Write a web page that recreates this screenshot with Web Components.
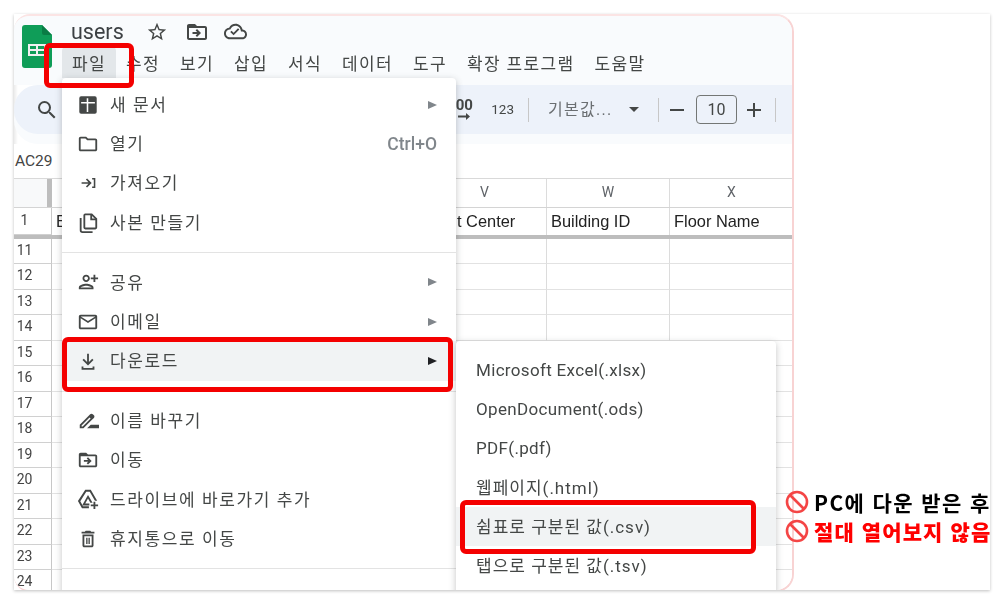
<!DOCTYPE html>
<html lang="ko">
<head>
<meta charset="utf-8">
<title>users</title>
<style>
  html, body { margin: 0; background: #fff; }
  body { font-family: Roboto, "Noto Sans CJK KR", sans-serif; width: 1005px; height: 605px; overflow: hidden; }
</style>
</head>
<body>
<shot-frame>
  <sheet-window>
    <sheet-header title-text="users">
      <span>파일</span><span>수정</span><span>보기</span><span>삽입</span><span>서식</span><span>데이터</span><span>도구</span><span>확장 프로그램</span><span>도움말</span>
    </sheet-header>
    <sheet-toolbar></sheet-toolbar>
    <name-bar>AC29</name-bar>
    <sheet-grid></sheet-grid>

    <file-menu>
      <menu-item icon="grid">새 문서</menu-item>
      <menu-item icon="folder" shortcut="Ctrl+O" noarrow>열기</menu-item>
      <menu-item icon="import" noarrow>가져오기</menu-item>
      <menu-item icon="copy" noarrow>사본 만들기</menu-item>
      <menu-sep></menu-sep>
      <menu-item icon="share">공유</menu-item>
      <menu-item icon="mail">이메일</menu-item>
      <menu-item icon="download" active>다운로드</menu-item>
      <menu-sep></menu-sep>
      <menu-item icon="rename" noarrow>이름 바꾸기</menu-item>
      <menu-item icon="move" noarrow>이동</menu-item>
      <menu-item icon="shortcut" noarrow>드라이브에 바로가기 추가</menu-item>
      <menu-item icon="trash" noarrow>휴지통으로 이동</menu-item>
      <menu-sep></menu-sep>
    </file-menu>

    <sub-menu>
      <menu-item plain noarrow>Microsoft Excel(.xlsx)</menu-item>
      <menu-item plain noarrow>OpenDocument(.ods)</menu-item>
      <menu-item plain noarrow>PDF(.pdf)</menu-item>
      <menu-item plain hangul noarrow>웹페이지(.html)</menu-item>
      <menu-item plain hangul noarrow active>쉼표로 구분된 값(.csv)</menu-item>
      <menu-item plain hangul noarrow>탭으로 구분된 값(.tsv)</menu-item>
    </sub-menu>
  </sheet-window>

  <red-box style="left:30px;top:29px;width:90px;height:45px"></red-box>
  <red-box style="left:48px;top:323px;width:391px;height:55px"></red-box>
  <red-box style="left:446px;top:486px;width:296px;height:54px"></red-box>

  <note-block>
    <note-line>PC에 다운 받은 후</note-line>
    <note-line alert>절대 열어보지 않음</note-line>
  </note-block>
</shot-frame>

<script>
  // Material style paths, viewBox 0 0 24 24
  const ICONS = {
    search: '<path d="M15.5 14h-.79l-.28-.27A6.471 6.471 0 0 0 16 9.5 6.5 6.5 0 1 0 9.5 16c1.61 0 3.09-.59 4.23-1.57l.27.28v.79l5 4.99L20.49 19l-4.99-5zm-6 0C7.01 14 5 11.99 5 9.5S7.01 5 9.5 5 14 7.01 14 9.5 11.99 14 9.5 14z"/>',
    star: '<path d="M22 9.24l-7.19-.62L12 2 9.19 8.63 2 9.24l5.46 4.73L5.82 21 12 17.27 18.18 21l-1.63-7.03L22 9.24zM12 15.4l-3.76 2.27 1-4.28-3.32-2.88 4.38-.38L12 6.1l1.71 4.04 4.38.38-3.32 2.88 1 4.28L12 15.4z"/>',
    move: '<path d="M20 6h-8l-2-2H4c-1.1 0-2 .9-2 2v12c0 1.1.9 2 2 2h16c1.1 0 2-.9 2-2V8c0-1.1-.9-2-2-2zm0 12H4V8h16v10z"/><path d="M12.2 12H7.5v2h4.7l-1.6 1.6L12 17l4-4-4-4-1.4 1.4z"/>',
    cloud: '<path d="M19.35 10.04C18.67 6.59 15.64 4 12 4 9.11 4 6.6 5.64 5.35 8.04 2.34 8.36 0 10.91 0 14c0 3.31 2.69 6 6 6h13c2.76 0 5-2.24 5-5 0-2.64-2.05-4.78-4.65-4.96zM19 18H6c-2.21 0-4-1.79-4-4 0-2.05 1.53-3.76 3.56-3.97l1.07-.11.5-.95C8.08 7.14 9.94 6 12 6c2.62 0 4.88 1.86 5.39 4.43l.3 1.5 1.53.11c1.56.1 2.78 1.41 2.78 2.96 0 1.65-1.35 3-3 3z"/><path d="M10 16l-3.5-3.5 1.4-1.4 2.1 2.1 4.6-4.6 1.4 1.4z"/>',
    grid: '<path fill-rule="evenodd" d="M4.5 2.5h15a2 2 0 0 1 2 2v15a2 2 0 0 1-2 2h-15a2 2 0 0 1-2-2v-15a2 2 0 0 1 2-2zM4.500 8.600v1.700h6.100v9.200h1.700v-9.200h7.200V8.600h-7.200V4.500h-1.700v4.100z"/>',
    folder: '<path d="M9.17 6l2 2H20v10H4V6h5.17M10 4H4c-1.1 0-1.99.9-1.99 2L2 18c0 1.1.9 2 2 2h16c1.1 0 2-.9 2-2V8c0-1.1-.9-2-2-2h-8l-2-2z"/>',
    import: '<path d="M11 7l-1.300 1.300 2.800 2.800H5v1.800h7.500l-2.800 2.800L11 17l5-5z"/><path d="M16.500 6.500H20v11h-3.500v-1.700h1.800V8.200h-1.800z"/>',
    copy: '<g fill="none" stroke="#444746" stroke-width="2"><path d="M9 2.500h7l5 5V17a1 1 0 0 1-1 1H9a1 1 0 0 1-1-1V3.500a1 1 0 0 1 1-1z"/><path d="M15.500 2.500V8H21"/><path d="M4 6.500V20a2 2 0 0 0 2 2h11"/></g>',
    share: '<path d="M10 12c2.21 0 4-1.79 4-4s-1.79-4-4-4-4 1.79-4 4 1.79 4 4 4zm0-6c1.1 0 2 .9 2 2s-.9 2-2 2-2-.9-2-2 .9-2 2-2zm0 8c-2.67 0-8 1.34-8 4v2h16v-2c0-2.66-5.33-4-8-4zm-6 4c.2-.72 3.3-2 6-2s5.8 1.29 6 2zM20 7V4h-2v3h-3v2h3v3h2V9h3V7z"/>',
    mail: '<path d="M20 4H4c-1.1 0-1.99.9-1.99 2L2 18c0 1.1.9 2 2 2h16c1.1 0 2-.9 2-2V6c0-1.1-.9-2-2-2zm0 14H4V8l8 5 8-5v10zm-8-7L4 6h16l-8 5z"/>',
    download: '<path d="M11 4h2v9.2l3.6-3.6L18 11l-6 6-6-6 1.4-1.4 3.6 3.6zM5 18h2v1.5h10V18h2v3.5H5z"/>',
    rename: '<path d="M18.41 5.8L17.2 4.59c-.78-.78-2.05-.78-2.83 0l-2.68 2.68L3 15.96V20h4.04l8.74-8.74 2.63-2.63c.79-.78.79-2.05 0-2.83zM6.21 18H5v-1.21l8.66-8.66 1.21 1.21L6.21 18zM11 20l4-4h10v4z"/>',
    shortcut: '<path d="M9 2h6l7 12h-2.4L13.9 4H10.1L3.6 14.4l3 5.6H13v2H5.4L1 14.3z"/><path d="M12 7.5l5 8.5h-2.4L12 11.5 9 17h4.5v2H5.6z"/><path d="M18 15h2v3h3v2h-3v3h-2v-3h-3v-2h3z"/>',
    trash: '<path d="M16 9v10H8V9h8m-1.5-6h-5l-1 1H5v2h14V4h-3.5l-1-1zM18 7H6v12c0 1.1.9 2 2 2h8c1.1 0 2-.9 2-2V7z"/><path d="M10 10.5h1.5v7H10zM12.5 10.5H14v7h-1.5z"/>',
    ban: '<circle cx="12" cy="12" r="10" fill="none" stroke="#f44545" stroke-width="2.6"/><path d="M5 5l14 14" fill="none" stroke="#f44545" stroke-width="2.6"/>'
  };

  class UiIcon extends HTMLElement {
    connectedCallback() {
      const size = this.getAttribute('size') || 22;
      const color = this.getAttribute('color') || '#444746';
      this.attachShadow({ mode: 'open' }).innerHTML = `
        <style>:host { display: inline-flex; flex: none; } svg { display: block; }</style>
        <svg width="${size}" height="${size}" viewBox="0 0 24 24" fill="${color}">${ICONS[this.getAttribute('name')]}</svg>`;
    }
  }

  class ShotFrame extends HTMLElement {
    constructor() {
      super();
      this.attachShadow({ mode: 'open' }).innerHTML = `
        <style>
          :host { display: block; position: absolute; left: 14px; top: 14px; width: 976px; height: 576px;
            background: #fff; overflow: hidden; filter: blur(.3px); box-shadow: 0 1px 3px rgba(0,0,0,.25); }
        </style>
        <slot></slot>`;
    }
  }

  class SheetWindow extends HTMLElement {
    constructor() {
      super();
      this.attachShadow({ mode: 'open' }).innerHTML = `
        <style>
          :host { display: flex; flex-direction: column; position: relative; box-sizing: border-box;
            width: 780px; height: 578px; overflow: hidden; background: #fff;
            border: 2px solid #f8d3d3; border-left: 0; border-top-color: #fbe4e4;
            border-radius: 16px 18px 18px 16px; box-shadow: inset 2px 0 3px rgba(0,0,0,.08); }
        </style>
        <slot></slot>`;
    }
  }

  class SheetHeader extends HTMLElement {
    constructor() {
      super();
      this.attachShadow({ mode: 'open' }).innerHTML = `
        <style>
          :host { display: flex; height: 69px; background: #f9fbfd; padding-left: 8px; gap: 10px; color: #444746; }
          .logo { margin-top: 9px; }
          .col { display: flex; flex-direction: column; }
          .title { display: flex; align-items: center; height: 31px; padding-left: 9px; font: 21.5px Roboto, sans-serif; color: #3c4043; }
          .title span { width: 75px; }
          .menu { display: flex; height: 31px; gap: 0; }
          ::slotted(span) { display: flex; align-items: center; padding: 0 10px; margin-right: 0;
            font-size: 17px; letter-spacing: 1.35px; white-space: nowrap; border-radius: 4px 4px 0 0; color: #444746; }
          ::slotted(span:first-child) { background: #e3e7ea; }
        </style>
        <svg class="logo" width="30" height="43" viewBox="0 0 30 43">
          <path d="M3 0h17l10 10v30a3 3 0 0 1-3 3H3a3 3 0 0 1-3-3V3a3 3 0 0 1 3-3z" fill="#0f9d58"/>
          <path d="M20 0l10 10H22a2 2 0 0 1-2-2z" fill="#0a7c45"/>
          <path d="M6 19h18v12H6zm2 2v3h6v-3zm8 0v3h6v-3zm-8 5v3h6v-3zm8 0v3h6v-3z" fill="#f1f1f1" fill-rule="evenodd"/>
        </svg>
        <div class="col">
          <div class="title">
            <span></span>
            <ui-icon name="star" size="22" style="margin-right:17px"></ui-icon>
            <ui-icon name="move" size="24" style="margin-right:15px"></ui-icon>
            <ui-icon name="cloud" size="23"></ui-icon>
          </div>
          <div class="menu"><slot></slot></div>
        </div>`;
      this.shadowRoot.querySelector('.title span').textContent = this.getAttribute('title-text');
    }
  }

  class SheetToolbar extends HTMLElement {
    constructor() {
      super();
      this.attachShadow({ mode: 'open' }).innerHTML = `
        <style>
          :host { display: flex; align-items: center; height: 49px; margin-bottom: 10px; box-shadow: 0 10px 0 #f9fbfd;
            background: #edf2fa; border-radius: 24px 0 0 24px; color: #444746; }
          .search { margin-left: 21px; margin-right: auto; }
          .dec { display: flex; flex-direction: column; align-items: center; width: 18px; font: bold 15px/12px Roboto, sans-serif; margin-right: 17px; }
          .dec svg { display: block; margin-top: 1px; }
          .n123 { font: 13.5px Roboto, sans-serif; margin: -2px 14px 0 1px; }
          .div { width: 1px; height: 24px; background: #c7c7c7; }
          .font { font-size: 16px; letter-spacing: 1.3px; color: #6b6f72; margin: -4px 0 0 19px; width: 81px; white-space: nowrap; }
          .caret { width: 0; height: 0; border: 5px solid transparent; border-top: 5px solid #444746; border-bottom: 0; margin-right: 19px; }
          .size { box-sizing: border-box; width: 41px; height: 29px; border: 1px solid #747775; border-radius: 4px;
            display: flex; align-items: center; justify-content: center; font: 16px Roboto, sans-serif; margin: 0 10px 0 12px; }
          .pm { width: 14px; height: 2px; background: #444746; position: relative; margin-left: 11px; }
          .pm.plus { margin: 0 14px 0 0; }
          .pm.plus::after { content: ""; position: absolute; left: 6px; top: -6px; width: 2px; height: 14px; background: #444746; }
          .end { margin-right: 16px; }
        </style>
        <ui-icon class="search" name="search" size="24"></ui-icon>
        <div class="dec"><span>00</span><svg width="14" height="9" viewBox="0 0 14 9" fill="#444746"><path d="M1 3.6h8V1l4 3.5L9 8V5.4H1z"/></svg></div>
        <div class="n123">123</div>
        <div class="div"></div>
        <div class="font">기본값...</div>
        <div class="caret"></div>
        <div class="div"></div>
        <div class="pm"></div>
        <div class="size">10</div>
        <div class="pm plus"></div>
        <div class="div end"></div>`;
    }
  }

  class NameBar extends HTMLElement {
    constructor() {
      super();
      this.attachShadow({ mode: 'open' }).innerHTML = `
        <style>
          :host { display: flex; align-items: center; height: 34px; padding-left: 1px; font: 15.5px Roboto, sans-serif; color: #444; background: #fff; position: relative; }
        </style>
        <slot></slot>`;
    }
  }

  class SheetGrid extends HTMLElement {
    constructor() {
      super();
      const cols = ['', '', 'V', 'W', 'X'];
      const body = ['', 'E', 't Center', 'Building ID', 'Floor Name'];
      const cell = (txt, cls) => `<div class="${cls}">${txt}</div>`;
      let rows = '';
      for (let n = 11; n <= 24; n++) {
        rows += cell(n, 'rn') + cell('', 'c') + cell('', 'c') + cell('', 'c') + cell('', 'c');
      }
      this.attachShadow({ mode: 'open' }).innerHTML = `
        <style>
          :host { display: block; flex: 1; border-top: 1px solid #d9d9d9; overflow: hidden; background: #fff; }
          .g { display: grid; grid-template-columns: 38px 371px 124px 123px 124px; }
          .head { grid-auto-rows: 28px; }
          .first { grid-auto-rows: 26.5px; border-bottom: 4.5px solid #bdbdbd; border-top: 1px solid #d4d4d4; box-sizing: content-box; }
          .rows { grid-auto-rows: 25.5px; }
          .g > div { box-sizing: border-box; border-right: 1px solid #dcdcdc; white-space: nowrap; overflow: hidden; }
          .ch { display: flex; align-items: center; justify-content: center; padding-bottom: 2px; font: 14px Roboto, sans-serif; color: #5f6368; }
          .corner { background: #f8f9fa; border-right: 5px solid #bdbdbd !important; }
          .t { display: flex; align-items: center; font: 16.4px "Liberation Sans", sans-serif; color: #222; padding-left: 4px; }
          .t.cut { padding-left: 34px; }
          .rn { font: 14px/23px Roboto, sans-serif; color: #444; padding-right: 16px; text-align: center; border-bottom: 1px solid #d0d0d0; border-right-color: #c7c7c7 !important; }
          .rh1 { line-height: 24px; }
          .c { border-bottom: 1px solid #e2e2e2; }
        </style>
        <div class="g head">
          ${cell('', 'ch corner')}${cols.slice(1).map(c => cell(c, 'ch')).join('')}
        </div>
        <div class="g first">
          ${cell('1', 'rn rh1')}${cell(body[1], 't')}${cell(body[2], 't cut')}${cell(body[3], 't')}${cell(body[4], 't')}
        </div>
        <div class="g rows">${rows}</div>`;
    }
  }

  class FileMenu extends HTMLElement {
    constructor() {
      super();
      this.attachShadow({ mode: 'open' }).innerHTML = `
        <style>
          :host { display: block; position: absolute; left: 48px; top: 62px; width: 394px; height: 530px; box-sizing: border-box;
            padding-top: 7px; background: #fff; border-radius: 4px; box-shadow: 0 2px 7px rgba(60,64,67,.3); overflow: hidden; }
        </style>
        <slot></slot>`;
    }
  }

  class SubMenu extends HTMLElement {
    constructor() {
      super();
      this.attachShadow({ mode: 'open' }).innerHTML = `
        <style>
          :host { display: block; position: absolute; left: 442px; top: 325px; width: 320px; height: 260px; box-sizing: border-box;
            padding-top: 9px; background: #fff; border-radius: 4px; box-shadow: 0 2px 7px rgba(60,64,67,.3); overflow: hidden; }
        </style>
        <slot></slot>`;
    }
  }

  class MenuItem extends HTMLElement {
    connectedCallback() {
      const icon = this.getAttribute('icon');
      const shortcut = this.getAttribute('shortcut');
      const noarrow = this.hasAttribute('noarrow');
      this.attachShadow({ mode: 'open' }).innerHTML = `
        <style>
          :host { display: flex; align-items: center; height: 39.3px; box-sizing: border-box; padding: 0 19px 0 15px;
            font-size: 17px; letter-spacing: 1.6px; color: #444746; white-space: nowrap; }
          :host([plain]) { padding-left: 20px; letter-spacing: .33px; }
          :host([hangul]) { letter-spacing: 1px; }
          :host([active]) { background: #f1f3f4; }
          .ic { width: 33px; display: flex; }
          .label { flex: 1; padding-bottom: 2.5px; }
          :host([plain]:not([hangul])) .label { padding-bottom: 0; }
          .sc { font: 500 17.5px Roboto, sans-serif; color: #80868b; letter-spacing: 0; }
          .ar { width: 0; height: 0; border: 4px solid transparent; border-left: 9px solid #80868b; border-right: 0; }
          :host([active]) .ar { border-left-color: #202124; }
        </style>
        ${icon ? `<span class="ic"><ui-icon name="${icon}" size="22"></ui-icon></span>` : ''}
        <span class="label"><slot></slot></span>
        ${shortcut ? `<span class="sc">${shortcut}</span>` : ''}
        ${noarrow ? '' : '<span class="ar"></span>'}`;
    }
  }

  class MenuSep extends HTMLElement {
    constructor() {
      super();
      this.attachShadow({ mode: 'open' }).innerHTML = `
        <style>:host { display: block; height: 1px; margin: 10px 0 9.5px; background: #e3e3e3; }</style>`;
    }
  }

  class RedBox extends HTMLElement {
    constructor() {
      super();
      this.attachShadow({ mode: 'open' }).innerHTML = `
        <style>
          :host { display: block; position: absolute; box-sizing: border-box; border: 5px solid #f40000; border-radius: 6px; }
        </style>`;
    }
  }

  class NoteBlock extends HTMLElement {
    constructor() {
      super();
      this.attachShadow({ mode: 'open' }).innerHTML = `
        <style>
          :host { display: flex; flex-direction: column; gap: 5px; position: absolute; left: 771px; top: 476px; width: 205px; }
        </style>
        <slot></slot>`;
    }
  }

  class NoteLine extends HTMLElement {
    constructor() {
      super();
      this.attachShadow({ mode: 'open' }).innerHTML = `
        <style>
          :host { display: flex; align-items: center; gap: 5px; height: 24px; white-space: nowrap;
            font: bold 21px/24px "Noto Sans CJK KR", sans-serif; letter-spacing: 1.4px; color: #000; }
          :host([alert]) { color: #ff0000; letter-spacing: 1.1px; font-weight: 900; }
        </style>
        <ui-icon name="ban" size="24"></ui-icon><span><slot></slot></span>`;
    }
  }

  customElements.define('ui-icon', UiIcon);
  customElements.define('shot-frame', ShotFrame);
  customElements.define('sheet-window', SheetWindow);
  customElements.define('sheet-header', SheetHeader);
  customElements.define('sheet-toolbar', SheetToolbar);
  customElements.define('name-bar', NameBar);
  customElements.define('sheet-grid', SheetGrid);
  customElements.define('file-menu', FileMenu);
  customElements.define('sub-menu', SubMenu);
  customElements.define('menu-item', MenuItem);
  customElements.define('menu-sep', MenuSep);
  customElements.define('red-box', RedBox);
  customElements.define('note-block', NoteBlock);
  customElements.define('note-line', NoteLine);
</script>
</body>
</html>
